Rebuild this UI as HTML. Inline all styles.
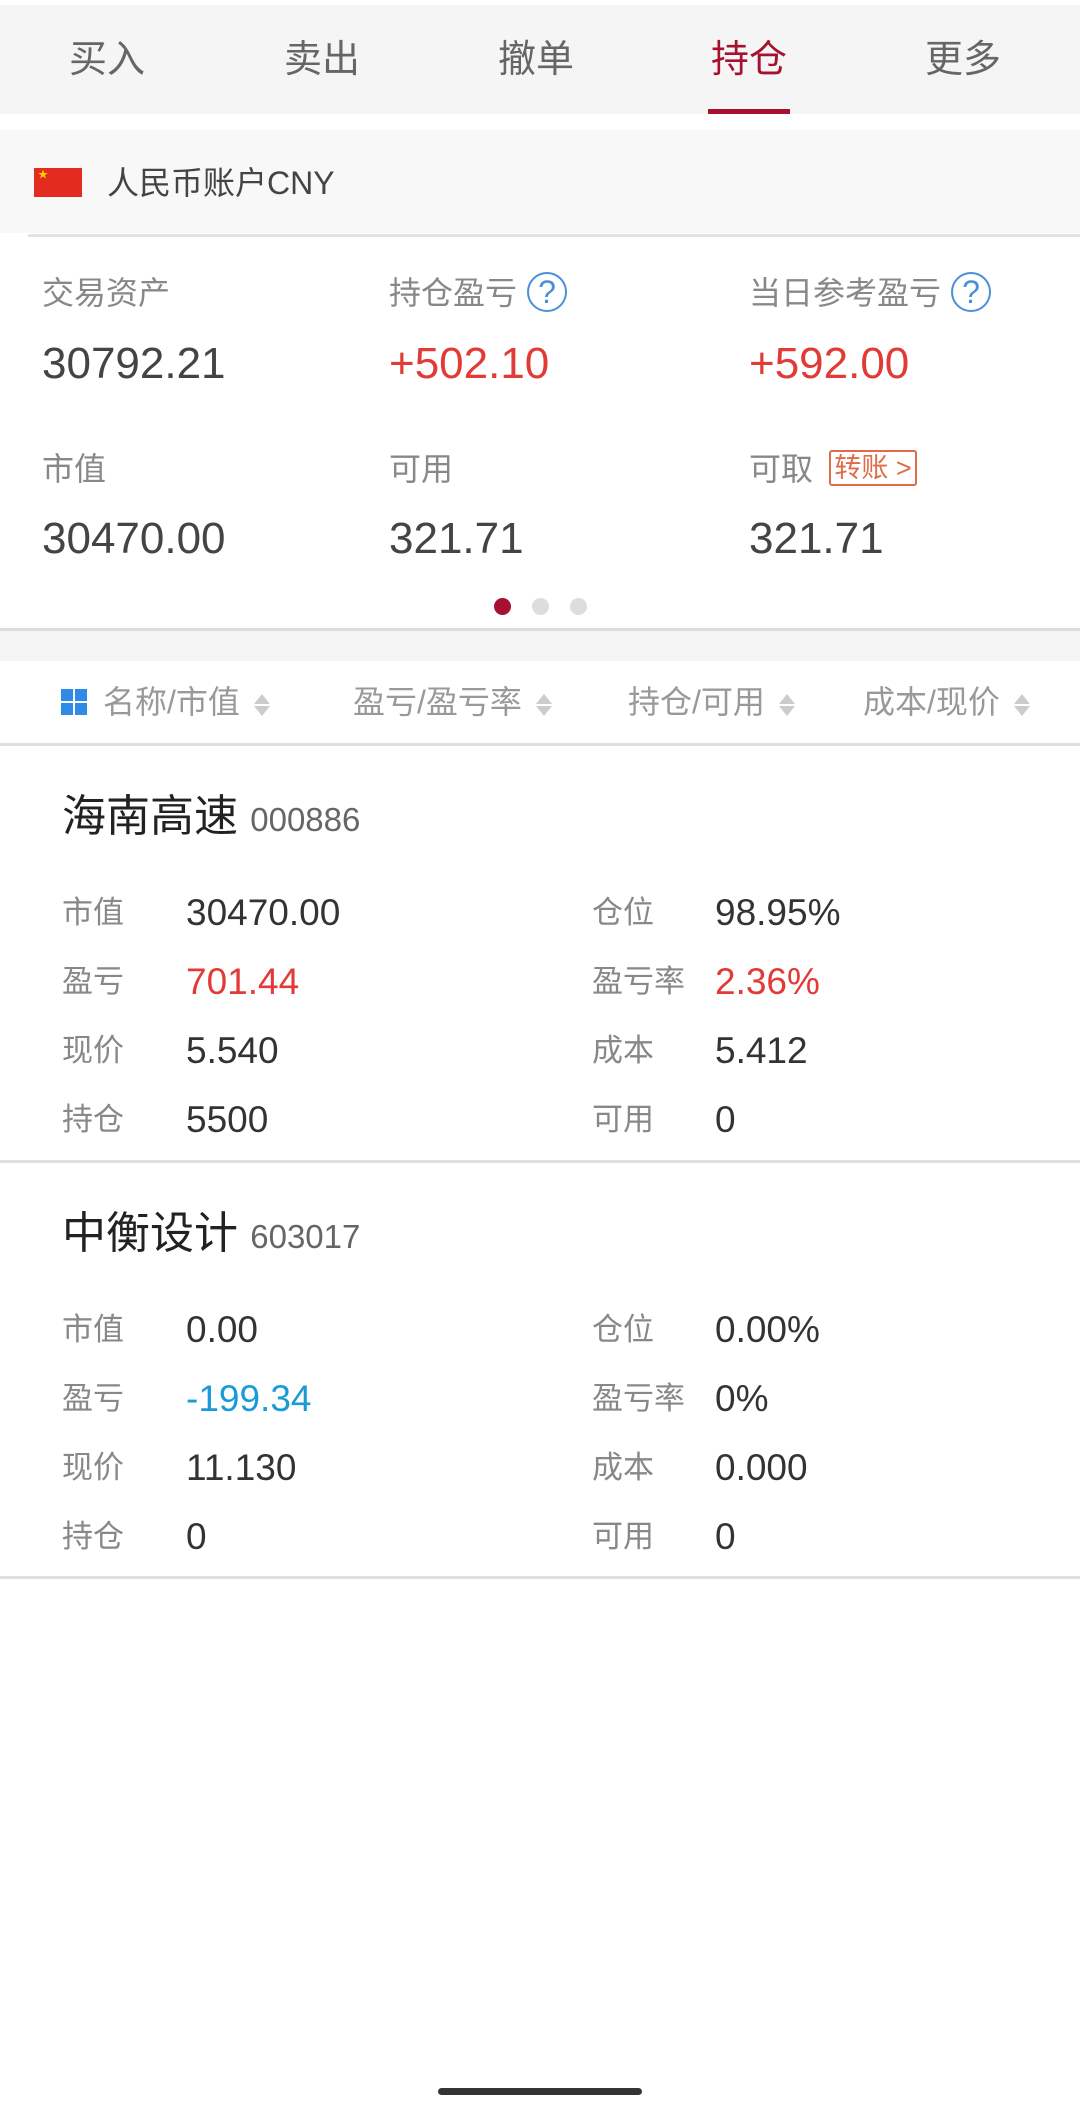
<!DOCTYPE html>
<html><head><meta charset="utf-8"><style>
*{margin:0;padding:0;box-sizing:border-box}
body{width:1080px;height:2127px;background:#fff;position:relative;overflow:hidden;font-family:"Liberation Sans","Noto Sans CJK SC",sans-serif}
.a{position:absolute;white-space:nowrap}
.tab{font-size:38px;color:#666;line-height:38px;top:41px;transform:translateX(-50%)}
.lab{font-size:32px;color:#888;line-height:32px}
.val{font-size:44px;color:#444;line-height:44px}
.q{display:inline-block;width:40px;height:40px;border:2px solid #4a90d9;border-radius:50%;color:#4a90d9;font-size:32px;line-height:36px;text-align:center;vertical-align:middle;margin-left:10px;margin-top:-8px}
.hd{font-size:32px;color:#999;line-height:32px;top:686px}
.ar{display:inline-block;width:16px;vertical-align:middle;margin-left:14px}
.ar i{display:block;width:0;height:0;border-left:8px solid transparent;border-right:8px solid transparent;margin:2px 0}
.rl{font-size:31px;color:#888;line-height:32px}
.rv{font-size:37px;color:#333;line-height:38px}
.a.red{color:#e23a36}
.line{position:absolute;left:0;width:1080px;height:3px;background:#e0e0e0}
</style></head><body>
<div class="a" style="left:0;top:5px;width:1080px;height:109px;background:#f5f5f5"></div>
<div class="a tab" style="left:107px">买入</div>
<div class="a tab" style="left:322px">卖出</div>
<div class="a tab" style="left:536px">撤单</div>
<div class="a tab" style="left:749px;color:#a5112f">持仓</div>
<div class="a tab" style="left:963px">更多</div>
<div class="a" style="left:708px;top:109px;width:82px;height:5px;background:#a5112f"></div>

<div class="a" style="left:0;top:130px;width:1080px;height:103px;background:#f8f8f8"></div>
<div class="a" style="left:34px;top:168px;width:48px;height:29px;background:#e32b1f"></div>
<div class="a" style="left:38px;top:171px;color:#f6d200;font-size:10px;line-height:10px">★</div>
<div class="a" style="left:107px;top:166px;font-size:32px;line-height:34px;color:#444">人民币账户CNY</div>
<div class="a" style="left:28px;top:234px;width:1052px;height:3px;background:#e3e3e3"></div>

<div class="a lab" style="left:42px;top:277px">交易资产</div>
<div class="a lab" style="left:389px;top:277px">持仓盈亏<span class="q">?</span></div>
<div class="a lab" style="left:749px;top:277px">当日参考盈亏<span class="q">?</span></div>
<div class="a val" style="left:42px;top:342px">30792.21</div>
<div class="a val red" style="left:389px;top:342px">+502.10</div>
<div class="a val red" style="left:749px;top:342px">+592.00</div>
<div class="a lab" style="left:42px;top:453px">市值</div>
<div class="a lab" style="left:389px;top:453px">可用</div>
<div class="a lab" style="left:749px;top:453px">可取</div>
<div class="a" style="left:829px;top:450px;width:88px;height:36px;border:2px solid #e06c4a;border-radius:3px;color:#e06c4a;font-size:27px;line-height:32px;text-align:center">转账 &gt;</div>
<div class="a val" style="left:42px;top:517px">30470.00</div>
<div class="a val" style="left:389px;top:517px">321.71</div>
<div class="a val" style="left:749px;top:517px">321.71</div>
<div class="a" style="left:494px;top:598px;width:17px;height:17px;border-radius:50%;background:#a5112f"></div>
<div class="a" style="left:532px;top:598px;width:17px;height:17px;border-radius:50%;background:#ddd"></div>
<div class="a" style="left:570px;top:598px;width:17px;height:17px;border-radius:50%;background:#ddd"></div>

<div class="a" style="left:0;top:628px;width:1080px;height:3px;background:#ddd"></div>
<div class="a" style="left:0;top:631px;width:1080px;height:30px;background:#f5f5f5"></div>
<div class="a" style="left:61px;top:689px;width:26px;height:26px">
<div class="a" style="left:0;top:0;width:12px;height:12px;background:#2f8ae8"></div>
<div class="a" style="left:14px;top:0;width:12px;height:12px;background:#2f8ae8"></div>
<div class="a" style="left:0;top:14px;width:12px;height:12px;background:#2f8ae8"></div>
<div class="a" style="left:14px;top:14px;width:12px;height:12px;background:#2f8ae8"></div></div>
<div class="a hd" style="left:103px">名称/市值<span class="ar"><i style="border-bottom:10px solid #ccc"></i><i style="border-top:10px solid #ccc"></i></span></div>
<div class="a hd" style="left:353px">盈亏/盈亏率<span class="ar"><i style="border-bottom:10px solid #ccc"></i><i style="border-top:10px solid #ccc"></i></span></div>
<div class="a hd" style="left:628px">持仓/可用<span class="ar"><i style="border-bottom:10px solid #ccc"></i><i style="border-top:10px solid #ccc"></i></span></div>
<div class="a hd" style="left:863px">成本/现价<span class="ar"><i style="border-bottom:10px solid #ccc"></i><i style="border-top:10px solid #ccc"></i></span></div>
<div class="line" style="top:743px"></div>

<div class="a" style="left:62px;top:794px;font-size:44px;line-height:46px;color:#222">海南高速 <span style="font-size:33px;color:#666">000886</span></div>
<div class="a rl" style="left:62px;top:897px">市值</div><div class="a rv" style="left:186px;top:894px">30470.00</div>
<div class="a rl" style="left:592px;top:897px">仓位</div><div class="a rv" style="left:715px;top:894px">98.95%</div>
<div class="a rl" style="left:62px;top:966px">盈亏</div><div class="a rv red" style="left:186px;top:963px">701.44</div>
<div class="a rl" style="left:592px;top:966px">盈亏率</div><div class="a rv red" style="left:715px;top:963px">2.36%</div>
<div class="a rl" style="left:62px;top:1035px">现价</div><div class="a rv" style="left:186px;top:1032px">5.540</div>
<div class="a rl" style="left:592px;top:1035px">成本</div><div class="a rv" style="left:715px;top:1032px">5.412</div>
<div class="a rl" style="left:62px;top:1104px">持仓</div><div class="a rv" style="left:186px;top:1101px">5500</div>
<div class="a rl" style="left:592px;top:1104px">可用</div><div class="a rv" style="left:715px;top:1101px">0</div>
<div class="line" style="top:1160px"></div>

<div class="a" style="left:62px;top:1211px;font-size:44px;line-height:46px;color:#222">中衡设计 <span style="font-size:33px;color:#666">603017</span></div>
<div class="a rl" style="left:62px;top:1314px">市值</div><div class="a rv" style="left:186px;top:1311px">0.00</div>
<div class="a rl" style="left:592px;top:1314px">仓位</div><div class="a rv" style="left:715px;top:1311px">0.00%</div>
<div class="a rl" style="left:62px;top:1383px">盈亏</div><div class="a rv" style="left:186px;top:1380px;color:#1a9bd7">-199.34</div>
<div class="a rl" style="left:592px;top:1383px">盈亏率</div><div class="a rv" style="left:715px;top:1380px">0%</div>
<div class="a rl" style="left:62px;top:1452px">现价</div><div class="a rv" style="left:186px;top:1449px">11.130</div>
<div class="a rl" style="left:592px;top:1452px">成本</div><div class="a rv" style="left:715px;top:1449px">0.000</div>
<div class="a rl" style="left:62px;top:1521px">持仓</div><div class="a rv" style="left:186px;top:1518px">0</div>
<div class="a rl" style="left:592px;top:1521px">可用</div><div class="a rv" style="left:715px;top:1518px">0</div>
<div class="line" style="top:1576px"></div>

<div class="a" style="left:438px;top:2088px;width:204px;height:7px;border-radius:4px;background:#333"></div>
</body></html>
